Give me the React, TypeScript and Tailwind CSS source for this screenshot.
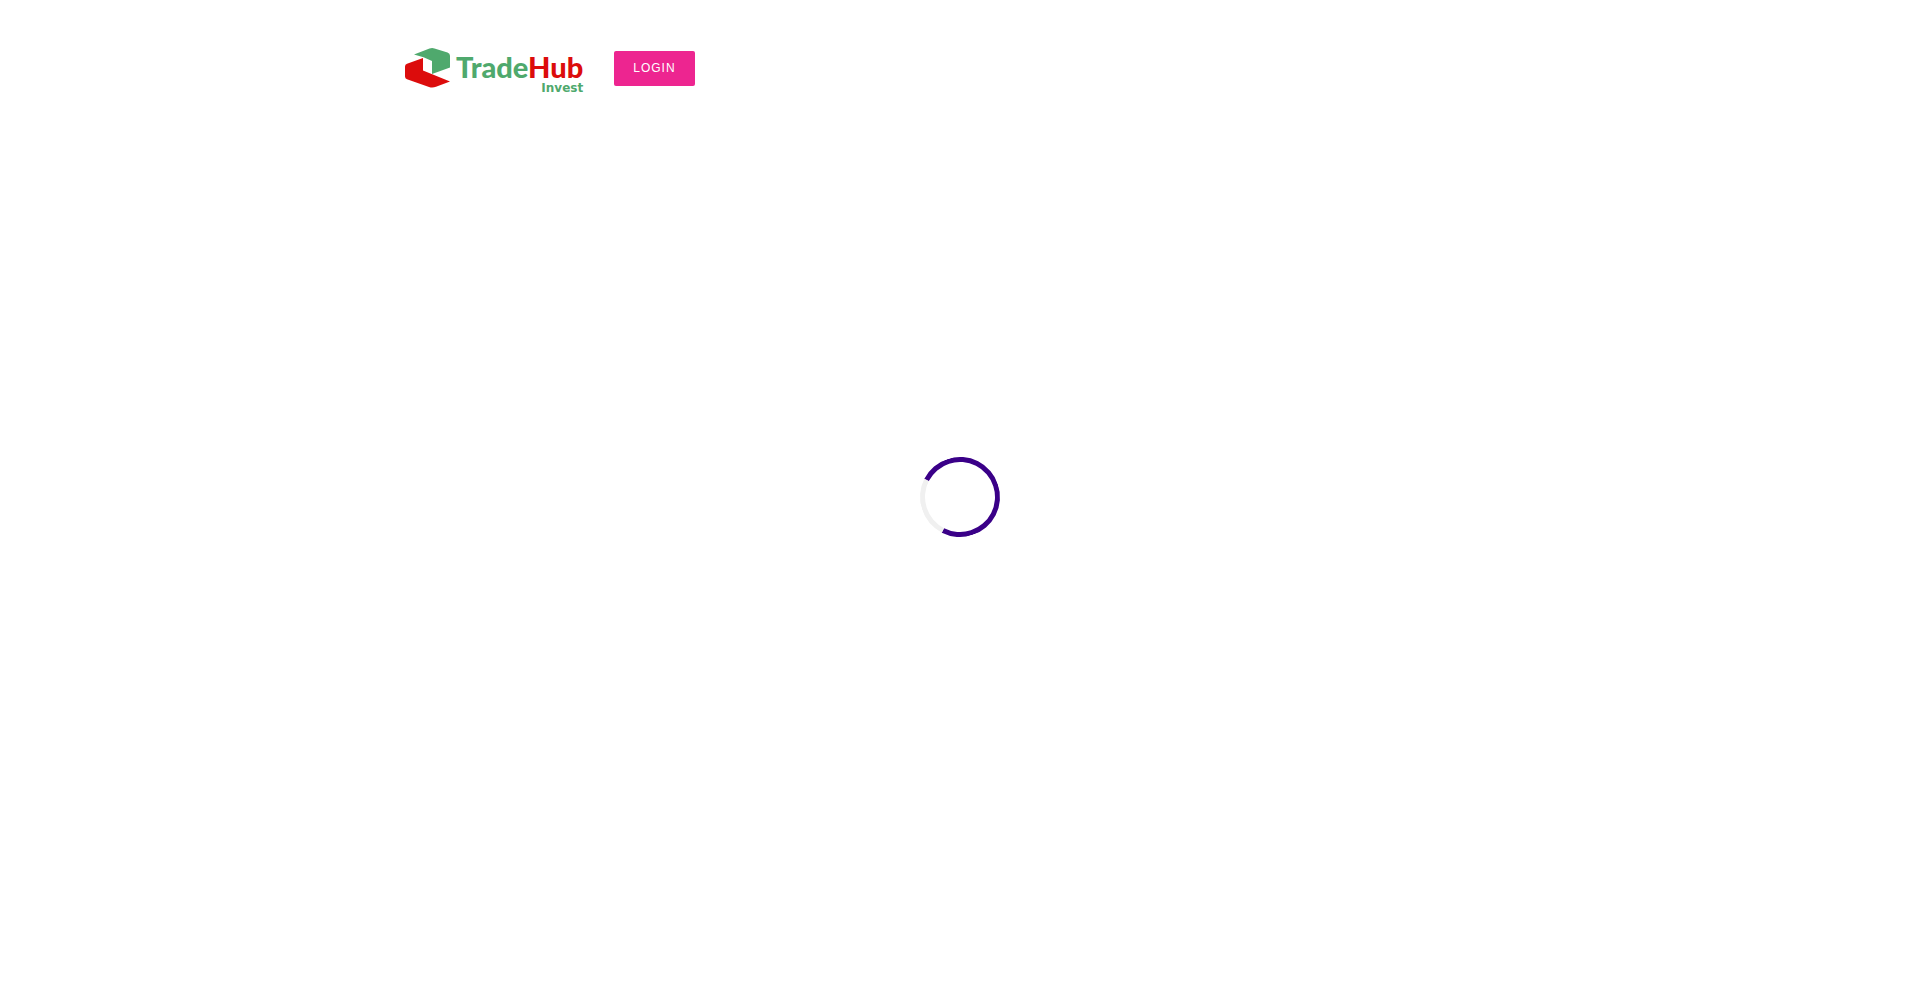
const colors = {
  green: "#4fa96d",
  red: "#dc0c0c",
};

// Two folded shapes of the brand mark
function LogoMark() {
  return (
    <svg
      className="h-10 w-[45px] shrink-0"
      viewBox="0 0 45 40"
      fill="none"
      aria-hidden="true"
    >
      <path
        fill={colors.green}
        d="M9 6.500 L24.500 0.500 Q27 -0.400 29.500 0.400 L42.500 4.500 Q45 5.300 45 7.700 V19.500 L27 26 V13 L18.500 9.200 Z"
      />
      <path
        fill={colors.red}
        d="M18 10 V22.500 L45 33.500 L31 38.700 Q27.500 40 24 38.900 L2 31.300 Q0 30.500 0 28.500 V18.500 Q0 16.500 2 15.700 Z"
      />
    </svg>
  );
}

function Logo() {
  return (
    <a href="#" className="flex items-start gap-[6px]">
      <LogoMark />
      <span className="flex flex-col items-end pt-[3px]">
        <span className="font-[Lato,sans-serif] text-[29px] leading-8 font-black text-[#4fa96d]">
          Trade<span className="text-[#dc0c0c]">Hub</span>
        </span>
        <span className="font-['DejaVu_Sans',sans-serif] text-xs leading-[10px] font-bold text-[#4fa96d]">
          Invest
        </span>
      </span>
    </a>
  );
}

function Header() {
  return (
    <header className="mx-auto flex max-w-[1140px] items-start gap-[31px] px-[15px] pt-12">
      <Logo />
      <button
        type="button"
        className="mt-[3px] rounded-xs bg-[#ed2590] px-[19px] py-2 font-['Liberation_Sans',sans-serif] text-xs leading-[19px] tracking-[1px] text-white uppercase"
      >
        Login
      </button>
    </header>
  );
}

function Preloader() {
  return (
    <div
      role="status"
      aria-label="Loading"
      className="pointer-events-none fixed inset-0 flex items-center justify-center"
    >
      <div className="size-20 -rotate-[18deg] rounded-full border-[5px] border-[#3a0088] border-l-[#f0f0f0]" />
    </div>
  );
}

function App() {
  return (
    <div className="min-h-screen bg-white">
      <Header />
      <Preloader />
    </div>
  );
}

export default App;
